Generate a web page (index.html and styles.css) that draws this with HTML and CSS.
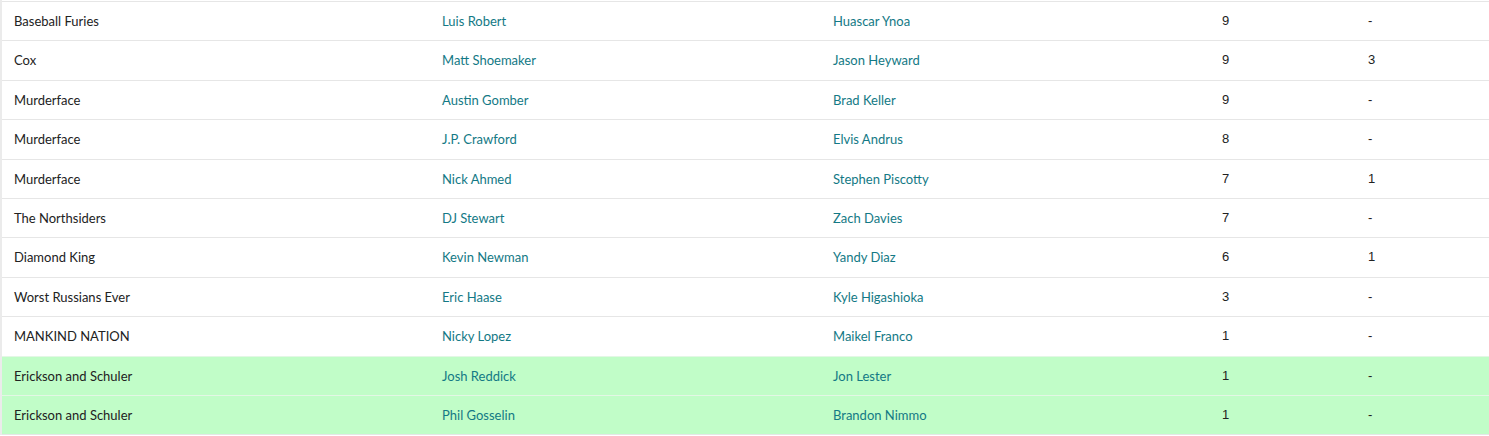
FILE: index.html
```html
<!DOCTYPE html>
<html>
<head>
<meta charset="utf-8">
<link rel="stylesheet" href="styles.css">
</head>
<body>
<div class="wrap">
<table class="grid">
<colgroup><col class="c1"><col class="c2"><col class="c3"><col class="c4"><col class="c5"></colgroup>
<tbody>
<tr><td>Baseball Furies</td><td><a>Luis Robert</a></td><td><a>Huascar Ynoa</a></td><td class="num">9</td><td class="num">-</td></tr>
<tr><td>Cox</td><td><a>Matt Shoemaker</a></td><td><a>Jason Heyward</a></td><td class="num">9</td><td class="num">3</td></tr>
<tr><td>Murderface</td><td><a>Austin Gomber</a></td><td><a>Brad Keller</a></td><td class="num">9</td><td class="num">-</td></tr>
<tr><td>Murderface</td><td><a>J.P. Crawford</a></td><td><a>Elvis Andrus</a></td><td class="num">8</td><td class="num">-</td></tr>
<tr><td>Murderface</td><td><a>Nick Ahmed</a></td><td><a>Stephen Piscotty</a></td><td class="num">7</td><td class="num">1</td></tr>
<tr><td>The Northsiders</td><td><a>DJ Stewart</a></td><td><a>Zach Davies</a></td><td class="num">7</td><td class="num">-</td></tr>
<tr><td>Diamond King</td><td><a>Kevin Newman</a></td><td><a>Yandy Diaz</a></td><td class="num">6</td><td class="num">1</td></tr>
<tr><td>Worst Russians Ever</td><td><a>Eric Haase</a></td><td><a>Kyle Higashioka</a></td><td class="num">3</td><td class="num">-</td></tr>
<tr><td>MANKIND NATION</td><td><a>Nicky Lopez</a></td><td><a>Maikel Franco</a></td><td class="num">1</td><td class="num">-</td></tr>
<tr class="hl"><td>Erickson and Schuler</td><td><a>Josh Reddick</a></td><td><a>Jon Lester</a></td><td class="num">1</td><td class="num">-</td></tr>
<tr class="hl"><td>Erickson and Schuler</td><td><a>Phil Gosselin</a></td><td><a>Brandon Nimmo</a></td><td class="num">1</td><td class="num">-</td></tr>
</tbody>
</table>
</div>
</body>
</html>
```

FILE: styles.css
```css
html, body {
  margin: 0;
  padding: 0;
  background: #ffffff;
}
.wrap {
  border-left: 2px solid #ebebeb;
  padding-top: 1px;
  background: #ffffff;
}
.grid {
  width: 100%;
  border-collapse: collapse;
  table-layout: fixed;
  font-family: Lato, "Noto Sans", sans-serif;
  font-size: 13px;
  color: #222222;
}
.c1 { width: 428px; }
.c2 { width: 391px; }
.c3 { width: 389px; }
.c4 { width: 146px; }
.grid td {
  border-top: 1px solid #e6e6e6;
  padding: 10px 12px;
  line-height: 18.4px;
  text-align: left;
  white-space: nowrap;
}
.grid tr:last-child td {
  border-bottom: 1px solid #e6e6e6;
}
.grid a {
  color: #137985;
  text-decoration: none;
}
.grid td.num {
  font-family: "Liberation Sans", Arial, sans-serif;
  color: #222222;
}
.grid tr.hl td {
  background: #c1fdc8;
  border-top-color: #e3f7e5;
}
```
